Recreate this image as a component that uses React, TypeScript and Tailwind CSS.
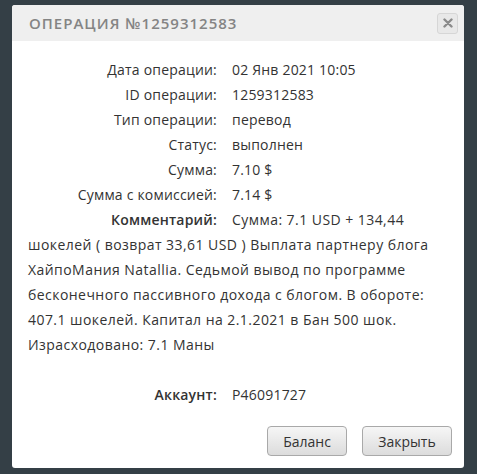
import React from 'react';

const rows: { label: string; value: string }[] = [
  { label: 'Дата операции:', value: '02 Янв 2021 10:05' },
  { label: 'ID операции:', value: '1259312583' },
  { label: 'Тип операции:', value: 'перевод' },
  { label: 'Статус:', value: 'выполнен' },
  { label: 'Сумма:', value: '7.10 $' },
  { label: 'Сумма с комиссией:', value: '7.14 $' },
];

export default function App() {
  return (
    <div className="w-[477px] h-[474px] bg-[#343f46] pt-[5px] pl-[12px] font-['Open_Sans',sans-serif]">
      <div className="w-[452px] h-[463px] bg-white rounded-[3px] flex flex-col overflow-hidden">
        {/* Header */}
        <div className="h-[36px] bg-[#efefef] flex items-center justify-between pl-[17px] pr-[6px] shrink-0">
          <span className="text-[15px] font-semibold tracking-[1px] text-[#848484]">ОПЕРАЦИЯ №1259312583</span>
          <button className="w-[21px] h-[21px] rounded-[3px] border border-[#d6d6d6] bg-[#e8e8e8] flex items-center justify-center">
            <svg width="10" height="10" viewBox="0 0 10 10">
              <path d="M1.5 1.5 L8.5 8.5 M8.5 1.5 L1.5 8.5" stroke="#8a8a8a" strokeWidth="2.4" strokeLinecap="round" />
            </svg>
          </button>
        </div>

        {/* Body */}
        <div className="flex-1 px-[16px] pt-[16px] text-[14px] leading-[25px] text-[#333] tracking-[0.2px]">
          {rows.map((r) => (
            <div key={r.label} className="flex">
              <span className="w-[189px] text-right shrink-0">{r.label}</span>
              <span className="ml-[15px]">{r.value}</span>
            </div>
          ))}
          <div className="tracking-[0.45px]">
            <span className="inline-block w-[189px] text-right font-semibold tracking-[0.2px]">Комментарий:</span>
            <span className="ml-[15px]">
              Сумма: 7.1 USD + 134,44 шокелей ( возврат 33,61 USD ) Выплата партнеру блога ХайпоМания Natallia. Седьмой вывод по программе бесконечного пассивного дохода с блогом. В обороте: 407.1 шокелей. Капитал на 2.1.2021 в Бан 500 шок. Израсходовано: 7.1 Маны
            </span>
          </div>
          <div className="flex mt-[25px]">
            <span className="w-[189px] text-right shrink-0 font-semibold">Аккаунт:</span>
            <span className="ml-[15px]">P46091727</span>
          </div>
        </div>

        {/* Footer */}
        <div className="flex justify-end gap-[15px] pr-[12px] pb-[12px]">
          <button className="h-[30px] w-[80px] rounded-[4px] border border-[#a9a9a9] bg-gradient-to-b from-[#f6f6f6] to-[#dcdcdc] text-[14px] text-[#333]">Баланс</button>
          <button className="h-[30px] w-[90px] rounded-[4px] border border-[#a9a9a9] bg-gradient-to-b from-[#f6f6f6] to-[#dcdcdc] text-[14px] text-[#333]">Закрыть</button>
        </div>
      </div>
    </div>
  );
}
